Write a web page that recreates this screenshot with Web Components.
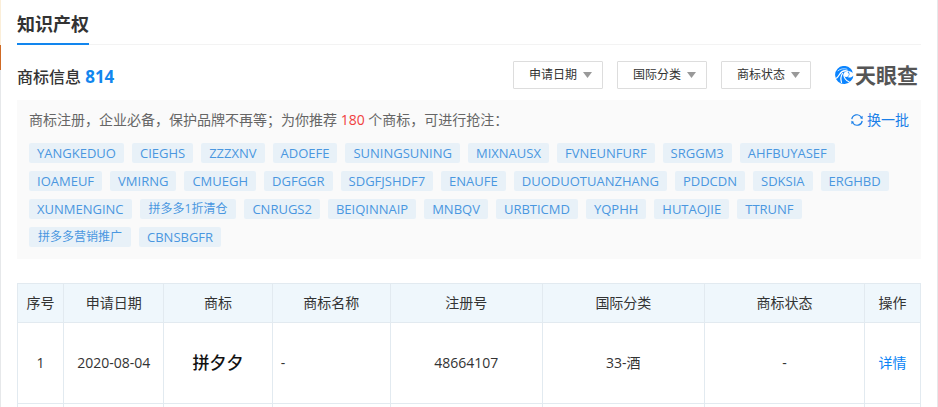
<!DOCTYPE html>
<html lang="zh-CN">
<head>
<meta charset="utf-8">
<title>知识产权</title>
<style>
  body {
    margin: 0;
    background: #fff;
    color: #333;
    font: 14px/20px "Open Sans", "Noto Sans CJK SC", sans-serif;
  }
</style>
</head>
<body>
<ip-page>
  <section-title>知识产权</section-title>
  <trademark-header count="814">商标信息
    <filter-select slot="filters" label="申请日期"></filter-select>
    <filter-select slot="filters" label="国际分类"></filter-select>
    <filter-select slot="filters" label="商标状态"></filter-select>
    <brand-logo slot="logo">天眼查</brand-logo>
  </trademark-header>
  <recommend-panel count="180"></recommend-panel>
  <trademark-table></trademark-table>
</ip-page>

<script>
class IpPage extends HTMLElement {
  constructor() {
    super();
    this.attachShadow({ mode: "open" }).innerHTML = `
      <style>
        :host {
          display: flex;
          height: 100vh;
          overflow: hidden;
        }
        .edge {
          flex: 0 0 1px;
          background: linear-gradient(#fbeed8 45px, #cf6a25 45px 70px, #e6e8ea 70px);
        }
        main {
          flex: 1;
          min-width: 0;
          padding: 12px 16px 0;
          border-right: 1px solid #e6e8ea;
        }
      </style>
      <div class="edge"></div>
      <main><slot></slot></main>
    `;
  }
}

class SectionTitle extends HTMLElement {
  constructor() {
    super();
    this.attachShadow({ mode: "open" }).innerHTML = `
      <style>
        :host {
          display: flex;
          border-bottom: 1px solid #f3f3f3;
        }
        h2 {
          margin: 0 0 -1px;
          padding-bottom: 7px;
          border-bottom: 2px solid #1286ee;
          font-size: 18px;
          line-height: 24px;
          font-weight: 700;
        }
      </style>
      <h2><slot></slot></h2>
    `;
  }
}

class TrademarkHeader extends HTMLElement {
  constructor() {
    super();
    this.attachShadow({ mode: "open" }).innerHTML = `
      <style>
        :host {
          display: flex;
          align-items: center;
          margin-top: 16px;
          padding-right: 3px;
        }
        h3 {
          flex: 1;
          align-self: flex-end;
          margin: 0;
          font-size: 16px;
          line-height: 24px;
          font-weight: 500;
        }
        .count {
          color: #1286ee;
          font-size: 17px;
          font-weight: 700;
        }
        .filters {
          display: flex;
          gap: 14px;
          margin-right: 24px;
        }
      </style>
      <h3><slot></slot><span class="count">${this.getAttribute("count")}</span></h3>
      <div class="filters"><slot name="filters"></slot></div>
      <slot name="logo"></slot>
    `;
  }
}

class FilterSelect extends HTMLElement {
  constructor() {
    super();
    const label = this.getAttribute("label");
    this.attachShadow({ mode: "open" }).innerHTML = `
      <style>
        :host {
          display: grid;
          align-items: center;
        }
        select, svg {
          grid-area: 1 / 1;
        }
        select {
          appearance: none;
          width: 90px;
          height: 28px;
          padding: 0 15px;
          border: 1px solid #ddd;
          border-radius: 1px;
          background: #fff;
          color: #333;
          font: inherit;
          font-size: 12px;
        }
        svg {
          justify-self: end;
          margin-right: 11px;
          pointer-events: none;
        }
      </style>
      <select aria-label="${label}"><option>${label}</option></select>
      <svg width="9" height="6" viewBox="0 0 9 6"><path d="M0 0h9L4.5 6z" fill="#999"/></svg>
    `;
  }
}

class BrandLogo extends HTMLElement {
  constructor() {
    super();
    this.attachShadow({ mode: "open" }).innerHTML = `
      <style>
        :host {
          display: flex;
          align-items: center;
          gap: 1px;
          color: #555;
          font-size: 21px;
          line-height: 24px;
          font-weight: 700;
        }
      </style>
      <svg width="19" height="18" viewBox="0 0 19 18">
        <path d="M15.5 2.600A9 9 0 1 0 16 14.700C17.600 13.500 18.300 11.500 18.200 9.500 17 11.500 14.500 12.200 12.800 11 15 9.500 15 6.500 13 5.300 14.800 5 16.500 5.600 17.600 7.200 17.600 5.300 16.800 3.800 15.500 2.600z" fill="#0a84ff"/>
        <g fill="none" stroke="#fff" stroke-linecap="round">
          <path d="M13 5.300C9 3.800 6 6 4.500 8.500S2.200 12 .8 12.500" stroke-width="1.300"/>
          <path d="M3 4.800C5.500 2.600 9 2.200 12 3.200" stroke-width=".7"/>
          <path d="M7.500 7.500C5.800 10 5.500 13 6.500 16.500" stroke-width="1.200"/>
          <path d="M8.800 9c.3 3.200 2.200 5.500 5.200 6.800" stroke-width="1.200"/>
        </g>
        <circle cx="11.200" cy="8.300" r="2.600" fill="#fff"/>
      </svg>
      <slot></slot>
    `;
  }
}

const TAGS = [
  "YANGKEDUO", "CIEGHS", "ZZZXNV", "ADOEFE", "SUNINGSUNING", "MIXNAUSX",
  "FVNEUNFURF", "SRGGM3", "AHFBUYASEF", "IOAMEUF", "VMIRNG", "CMUEGH",
  "DGFGGR", "SDGFJSHDF7", "ENAUFE", "DUODUOTUANZHANG", "PDDCDN", "SDKSIA",
  "ERGHBD", "XUNMENGINC", "拼多多1折清仓", "CNRUGS2", "BEIQINNAIP", "MNBQV",
  "URBTICMD", "YQPHH", "HUTAOJIE", "TTRUNF", "拼多多营销推广", "CBNSBGFR",
];

class RecommendPanel extends HTMLElement {
  constructor() {
    super();
    const tags = TAGS.map((tag) => {
      const cls = /^[\x00-\x7f]+$/.test(tag) ? "latin" : "han";
      return `<a class="${cls}" href="#">${tag}</a>`;
    });
    this.attachShadow({ mode: "open" }).innerHTML = `
      <style>
        :host {
          display: block;
          margin-top: 11px;
          padding: 10px 12px 12px;
          background: #fafafa;
        }
        .top {
          display: flex;
          justify-content: space-between;
          color: #666;
        }
        p {
          margin: 0;
        }
        em {
          color: #f04040;
          font-style: normal;
        }
        button {
          display: flex;
          align-items: center;
          gap: 4px;
          padding: 0;
          border: 0;
          background: none;
          color: #1a7fe8;
          font: inherit;
          cursor: pointer;
        }
        .tags {
          display: flex;
          flex-wrap: wrap;
          gap: 8px;
          margin: 13px 12px 0 0;
        }
        .tags a {
          border-radius: 2px;
          background: #e8f1f8;
          color: #4a97e0;
          line-height: 20px;
          text-decoration: none;
        }
        .latin {
          padding: 0 8px;
          font-size: 13px;
        }
        .han {
          padding: 0 9px;
          font-size: 12px;
        }
      </style>
      <div class="top">
        <p>商标注册，企业必备，保护品牌不再等；为你推荐 <em>${this.getAttribute("count")}</em> 个商标，可进行抢注：</p>
        <button type="button">
          <svg width="12" height="12" viewBox="0 0 12 12">
            <path d="M.8 5.200A5.200 5.200 0 0 1 10.200 3M11.200 6.800A5.200 5.200 0 0 1 1.800 9" fill="none" stroke="#1a7fe8" stroke-width="1.200"/>
            <path d="M11.600 1.800v3.400L8.800 4zM.4 10.200V6.800L3.200 8z" fill="#1a7fe8"/>
          </svg>
          换一批
        </button>
      </div>
      <div class="tags">${tags.join("")}</div>
    `;
  }
}

class TrademarkTable extends HTMLElement {
  constructor() {
    super();
    this.attachShadow({ mode: "open" }).innerHTML = `
      <style>
        :host {
          display: block;
          margin-top: 24px;
        }
        table {
          width: 100%;
          table-layout: fixed;
          border-collapse: collapse;
        }
        th, td {
          padding: 0 8px;
          border: 1px solid #e2eaf0;
          text-align: center;
        }
        th {
          height: 38px;
          padding: 0;
          background: #eff7fc;
          font-weight: 400;
        }
        td {
          height: 80px;
        }
        .name {
          text-align: left;
        }
        .mark {
          color: #111;
          font-size: 17px;
          font-weight: 500;
        }
        a {
          color: #0a84f5;
          text-decoration: none;
        }
      </style>
      <table>
        <colgroup>
          <col style="width: 5.1%"><col style="width: 11.1%"><col style="width: 12%">
          <col style="width: 13.1%"><col style="width: 16.8%"><col style="width: 18%">
          <col style="width: 17.7%"><col>
        </colgroup>
        <thead>
          <tr>
            <th>序号</th><th>申请日期</th><th>商标</th><th>商标名称</th>
            <th>注册号</th><th>国际分类</th><th>商标状态</th><th>操作</th>
          </tr>
        </thead>
        <tbody>
          <tr>
            <td>1</td><td>2020-08-04</td><td class="mark">拼夕夕</td><td class="name">-</td>
            <td>48664107</td><td>33-酒</td><td>-</td><td><a href="#">详情</a></td>
          </tr>
          <tr>
            <td></td><td></td><td></td><td></td><td></td><td></td><td></td><td></td>
          </tr>
        </tbody>
      </table>
    `;
  }
}

customElements.define("ip-page", IpPage);
customElements.define("section-title", SectionTitle);
customElements.define("trademark-header", TrademarkHeader);
customElements.define("filter-select", FilterSelect);
customElements.define("brand-logo", BrandLogo);
customElements.define("recommend-panel", RecommendPanel);
customElements.define("trademark-table", TrademarkTable);
</script>
</body>
</html>
